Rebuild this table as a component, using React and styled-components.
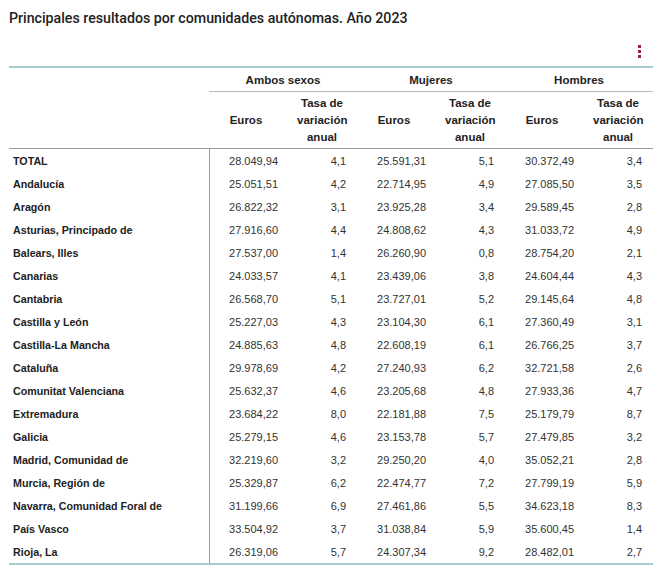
import React from "react";
import styled, { createGlobalStyle } from "styled-components";

const GlobalStyle = createGlobalStyle`
  body {
    margin: 0;
    background: #fff;
    font-family: "Liberation Sans", Arial, sans-serif;
    color: #222;
  }
`;

const Page = styled.div`
  width: 664px;
  padding: 9px 11px 0 9px;
  box-sizing: border-box;
`;

const Title = styled.h1`
  margin: 0;
  font-family: Roboto, "Liberation Sans", sans-serif;
  font-weight: 500;
  font-size: 14.2px;
  line-height: 18px;
  color: #222;
`;

const ToolRow = styled.div`
  display: flex;
  justify-content: flex-end;
  padding: 18px 12px 0 0;
  height: 21px;
`;

const Kebab = styled.div`
  display: flex;
  flex-direction: column;
  gap: 2px;
  span {
    width: 3px;
    height: 3px;
    background: #a3223a;
  }
`;

const Table = styled.table`
  width: 644px;
  border-collapse: collapse;
  table-layout: fixed;
  border-top: 2px solid #a3cacc;
  border-bottom: 2px solid #a3cacc;
  font-size: 11px;
`;

const GroupTh = styled.th`
  height: 23px;
  padding: 0;
  font-size: 11.5px;
  font-weight: bold;
  text-align: center;
  border-bottom: ${(p) => (p.$blank ? "none" : "1px solid #b9b9b9")};
`;

const SubTh = styled.th`
  height: 56px;
  padding: 0 ${(p) => (p.$tasa ? "10px" : "4px")} 0 ${(p) => (p.$tasa ? "14px" : "4px")};
  font-size: 11.5px;
  line-height: 17px;
  font-weight: bold;
  text-align: center;
  border-bottom: 1px solid #9a9a9a;
`;

const Label = styled.td`
  height: 23px;
  padding: 0 0 0 4px;
  font-size: 10.7px;
  font-weight: bold;
  border-right: 1px solid #9a9a9a;
  white-space: nowrap;
`;

const Num = styled.td`
  padding: 0 ${(p) => (p.$tasa ? "11px" : "5px")} 0 0;
  text-align: right;
  color: #333;
`;

const rows = [
  ["TOTAL", "28.049,94", "4,1", "25.591,31", "5,1", "30.372,49", "3,4"],
  ["Andalucía", "25.051,51", "4,2", "22.714,95", "4,9", "27.085,50", "3,5"],
  ["Aragón", "26.822,32", "3,1", "23.925,28", "3,4", "29.589,45", "2,8"],
  ["Asturias, Principado de", "27.916,60", "4,4", "24.808,62", "4,3", "31.033,72", "4,9"],
  ["Balears, Illes", "27.537,00", "1,4", "26.260,90", "0,8", "28.754,20", "2,1"],
  ["Canarias", "24.033,57", "4,1", "23.439,06", "3,8", "24.604,44", "4,3"],
  ["Cantabria", "26.568,70", "5,1", "23.727,01", "5,2", "29.145,64", "4,8"],
  ["Castilla y León", "25.227,03", "4,3", "23.104,30", "6,1", "27.360,49", "3,1"],
  ["Castilla-La Mancha", "24.885,63", "4,8", "22.608,19", "6,1", "26.766,25", "3,7"],
  ["Cataluña", "29.978,69", "4,2", "27.240,93", "6,2", "32.721,58", "2,6"],
  ["Comunitat Valenciana", "25.632,37", "4,6", "23.205,68", "4,8", "27.933,36", "4,7"],
  ["Extremadura", "23.684,22", "8,0", "22.181,88", "7,5", "25.179,79", "8,7"],
  ["Galicia", "25.279,15", "4,6", "23.153,78", "5,7", "27.479,85", "3,2"],
  ["Madrid, Comunidad de", "32.219,60", "3,2", "29.250,20", "4,0", "35.052,21", "2,8"],
  ["Murcia, Región de", "25.329,87", "6,2", "22.474,77", "7,2", "27.799,19", "5,9"],
  ["Navarra, Comunidad Foral de", "31.199,66", "6,9", "27.461,86", "5,5", "34.623,18", "8,3"],
  ["País Vasco", "33.504,92", "3,7", "31.038,84", "5,9", "35.600,45", "1,4"],
  ["Rioja, La", "26.319,06", "5,7", "24.307,34", "9,2", "28.482,01", "2,7"],
];

const groups = ["Ambos sexos", "Mujeres", "Hombres"];

export default function App() {
  return (
    <Page>
      <GlobalStyle />
      <Title>Principales resultados por comunidades autónomas. Año 2023</Title>
      <ToolRow>
        <Kebab>
          <span />
          <span />
          <span />
        </Kebab>
      </ToolRow>
      <Table>
        <colgroup>
          <col style={{ width: 200 }} />
          {[0, 1, 2, 3, 4, 5].map((i) => (
            <col key={i} style={{ width: 74 }} />
          ))}
        </colgroup>
        <thead>
          <tr>
            <GroupTh $blank />
            {groups.map((g) => (
              <GroupTh key={g} colSpan={2}>
                {g}
              </GroupTh>
            ))}
          </tr>
          <tr>
            <SubTh />
            {groups.map((g) => (
              <React.Fragment key={g}>
                <SubTh>Euros</SubTh>
                <SubTh $tasa>
                  Tasa de
                  <br />
                  variación
                  <br />
                  anual
                </SubTh>
              </React.Fragment>
            ))}
          </tr>
        </thead>
        <tbody>
          {rows.map(([name, ...vals]) => (
            <tr key={name}>
              <Label>{name}</Label>
              {vals.map((v, i) => (
                <Num key={i} $tasa={i % 2 === 1}>
                  {v}
                </Num>
              ))}
            </tr>
          ))}
        </tbody>
      </Table>
    </Page>
  );
}
